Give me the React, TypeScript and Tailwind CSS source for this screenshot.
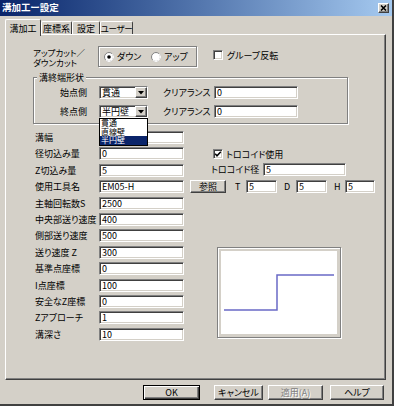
const sunken =
  "border border-t-[#808080] border-l-[#808080] border-b-white border-r-white shadow-[inset_1px_1px_0_#404040,inset_-1px_-1px_0_#d4d0c8]";
const raised =
  "border border-t-white border-l-white border-b-[#404040] border-r-[#404040] shadow-[inset_-1px_-1px_0_#808080]";
const etched = "border border-[#808080] shadow-[inset_1px_1px_0_#fff,1px_1px_0_#fff]";

function Field({ w, value }: { w: string; value: string }) {
  return (
    <div className={`${sunken} ${w} h-[13px] bg-white flex items-center pl-[2px] text-[9px] leading-none`}>
      {value}
    </div>
  );
}

function Radio({ on }: { on?: boolean }) {
  return (
    <svg width="10" height="10" viewBox="0 0 10 10" className="shrink-0">
      <circle cx="5" cy="5" r="4.5" fill="#fff" stroke="#808080" />
      <path d="M1.8 8.2 A4.5 4.5 0 0 0 8.2 1.8" fill="none" stroke="#fff" />
      {on && <circle cx="5" cy="5" r="1.8" fill="#000" />}
    </svg>
  );
}

function Check({ on }: { on?: boolean }) {
  return (
    <div className={`${sunken} w-[10px] h-[10px] bg-white shrink-0 flex items-center justify-center`}>
      {on && (
        <svg width="8" height="8" viewBox="0 0 8 8">
          <path d="M1.2 3.8 L3 5.8 L6.8 1.8" fill="none" stroke="#000" strokeWidth="1.5" />
        </svg>
      )}
    </div>
  );
}

function Combo({ value, open }: { value: string; open?: boolean }) {
  return (
    <div className="relative">
      <div className={`${sunken} w-[49px] h-[13px] bg-white flex items-center justify-between pl-[2px]`}>
        <span>{value}</span>
        <div className={`${raised} w-[12px] h-[11px] bg-[#d4d0c8] flex items-center justify-center`}>
          <svg width="6" height="4" viewBox="0 0 6 4">
            <path d="M0 0 H6 L3 3.5 Z" fill="#000" />
          </svg>
        </div>
      </div>
      {open && (
        <div className="absolute top-[13px] left-0 w-[49px] bg-white border border-black z-20 flex flex-col text-[8px]">
          <div className="h-[8.5px] leading-[8.5px] pl-[1px]">貫通</div>
          <div className="h-[8.5px] leading-[8.5px] pl-[1px]">直線壁</div>
          <div className="h-[8.5px] leading-[8.5px] pl-[1px] bg-[#0a246a] text-white">半円壁</div>
        </div>
      )}
    </div>
  );
}

const rows: [string, string][] = [
  ["溝幅", ""],
  ["径切込み量", "0"],
  ["Z切込み量", "5"],
  ["使用工具名", "EM05-H"],
  ["主軸回転数S", "2500"],
  ["中央部送り速度", "400"],
  ["側部送り速度", "500"],
  ["送り速度 Z", "300"],
  ["基準点座標", "0"],
  ["I点座標", "100"],
  ["安全なZ座標", "0"],
  ["Zアプローチ", "1"],
  ["溝深さ", "10"],
];

export default function App() {
  return (
    <div className="w-[394px] h-[406px] bg-[#d4d0c8] flex flex-col font-['Noto_Sans_CJK_JP','Noto_Sans',sans-serif] [font-feature-settings:'palt'] text-[9px] leading-none text-black whitespace-nowrap border-r-2 border-b-2 border-r-[#404040] border-b-[#404040] overflow-hidden select-none">
      {/* title bar */}
      <div className="h-[16px] bg-gradient-to-r from-[#0a246a] to-[#a6caf0] flex items-center justify-between pl-[2px] pr-[3px]">
        <span className="text-white font-bold text-[9.5px]">溝加工ー設定</span>
        <div className={`${raised} w-[11px] h-[10px] bg-[#d4d0c8] flex items-center justify-center`}>
          <svg width="7" height="6" viewBox="0 0 7 6">
            <path d="M1 0.5 L6 5.5 M6 0.5 L1 5.5" stroke="#000" strokeWidth="1.6" />
          </svg>
        </div>
      </div>

      {/* tabs */}
      <div className="mt-[3px] ml-[5px] flex items-end h-[15px]">
        <div className="relative z-10 w-[36px] h-[17px] -mb-[2px] bg-[#d4d0c8] border-t border-l border-white border-r border-r-[#404040] rounded-t-[2px] flex justify-center pt-[4px]">
          溝加工
        </div>
        <div className="w-[31px] h-[13px] border-t border-l border-white border-r border-r-[#404040] rounded-t-[2px] flex justify-center pt-[2px]">
          座標系
        </div>
        <div className="w-[28px] h-[13px] border-t border-l border-white border-r border-r-[#404040] rounded-t-[2px] flex justify-center pt-[2px]">
          設定
        </div>
        <div className="w-[33px] h-[13px] border-t border-l border-white border-r border-r-[#404040] rounded-t-[2px] flex justify-center pt-[2px] text-[8.5px] tracking-[-0.3px]">
          ユーザー
        </div>
      </div>

      {/* panel */}
      <div className="ml-[5px] w-[381px] h-[346px] border border-t-white border-l-white border-r-[#404040] border-b-[#404040] shadow-[inset_-1px_-1px_0_#808080] pl-[27px]">
        <div className="mt-[11px] flex items-start">
          <div className="w-[65px] pt-[1px] text-[8.5px]">
            <div className="h-[10px] leading-[10px]">アップカット／</div>
            <div className="h-[10px] leading-[10px]">ダウンカット</div>
          </div>
          <div className={`${etched} w-[99px] h-[21px] flex items-center pl-[5px]`}>
            <div className="w-[47px] flex items-center gap-[3px]">
              <Radio on />
              <span>ダウン</span>
            </div>
            <div className="flex items-center gap-[3px]">
              <Radio />
              <span>アップ</span>
            </div>
          </div>
          <div className="ml-[16px] mt-[4px] flex items-center gap-[4px]">
            <Check />
            <span>グループ反転</span>
          </div>
        </div>

        {/* group box */}
        <div className={`${etched} relative mt-[10px] w-[315px] h-[47px] pt-[8px]`}>
          <span className="absolute -top-[5px] left-[3px] px-[2px] bg-[#d4d0c8]">溝終端形状</span>
          <div className="flex items-center h-[13px]">
            <div className="w-[53px] text-right">始点側</div>
            <div className="ml-[12px]">
              <Combo value="貫通" />
            </div>
            <div className="ml-[15px] w-[51px]">クリアランス</div>
            <Field w="w-[84px]" value="0" />
          </div>
          <div className="mt-[6px] flex items-center h-[13px]">
            <div className="w-[53px] text-right">終点側</div>
            <div className="ml-[12px]">
              <Combo value="半円壁" open />
            </div>
            <div className="ml-[15px] w-[51px]">クリアランス</div>
            <Field w="w-[84px]" value="0" />
          </div>
        </div>

        <div className="mt-[7px] flex items-start">
          <div className="w-[151px] flex flex-col gap-[3.4px]">
            {rows.map(([label, value]) => (
              <div key={label} className="flex items-center h-[13px]">
                <div className="w-[66px] pl-[2px]">{label}</div>
                <Field w="w-[85px]" value={value} />
              </div>
            ))}
          </div>

          <div className="ml-[6px] flex flex-col">
            <div className="mt-[18px] pl-[23px] flex items-center gap-[3px] h-[10px]">
              <Check on />
              <span>トロコイド使用</span>
            </div>
            <div className="mt-[4px] pl-[21px] flex items-center h-[13px]">
              <div className="w-[52px]">トロコイド径</div>
              <Field w="w-[83px]" value="5" />
            </div>
            <div className="mt-[4px] flex items-center h-[13px]">
              <div className={`${raised} w-[36px] h-[13px] flex items-center justify-center`}>参照</div>
              <div className="ml-[9px] w-[11px]">T</div>
              <Field w="w-[31px]" value="5" />
              <div className="ml-[7px] w-[12px]">D</div>
              <Field w="w-[31px]" value="5" />
              <div className="ml-[7px] w-[11px]">H</div>
              <Field w="w-[30px]" value="5" />
            </div>
            <div className={`${etched} mt-[54px] ml-[27px] w-[124px] h-[91px] p-[3px]`}>
              <div className="w-full h-full bg-white">
                <svg width="116" height="83" viewBox="0 0 116 83">
                  <polyline points="3,59 56,59 56,24 113,24" fill="none" stroke="#6a6ac6" strokeWidth="1.5" />
                </svg>
              </div>
            </div>
          </div>
        </div>
      </div>

      {/* buttons */}
      <div className="mt-[5px] flex">
        <div className="ml-[143px] w-[57px] h-[15px] border border-black shadow-[inset_1px_1px_0_#fff,inset_-1px_-1px_0_#404040,inset_-2px_-2px_0_#808080] flex items-center justify-center">
          OK
        </div>
        <div className={`${raised} ml-[14px] w-[49px] h-[15px] flex items-center justify-center`}>キャンセル</div>
        <div className={`${raised} ml-[5px] w-[55px] h-[15px] flex items-center justify-center text-[#808080] [text-shadow:1px_1px_0_#fff]`}>
          適用(A)
        </div>
        <div className={`${raised} ml-[7px] w-[54px] h-[15px] flex items-center justify-center`}>ヘルプ</div>
      </div>
    </div>
  );
}
